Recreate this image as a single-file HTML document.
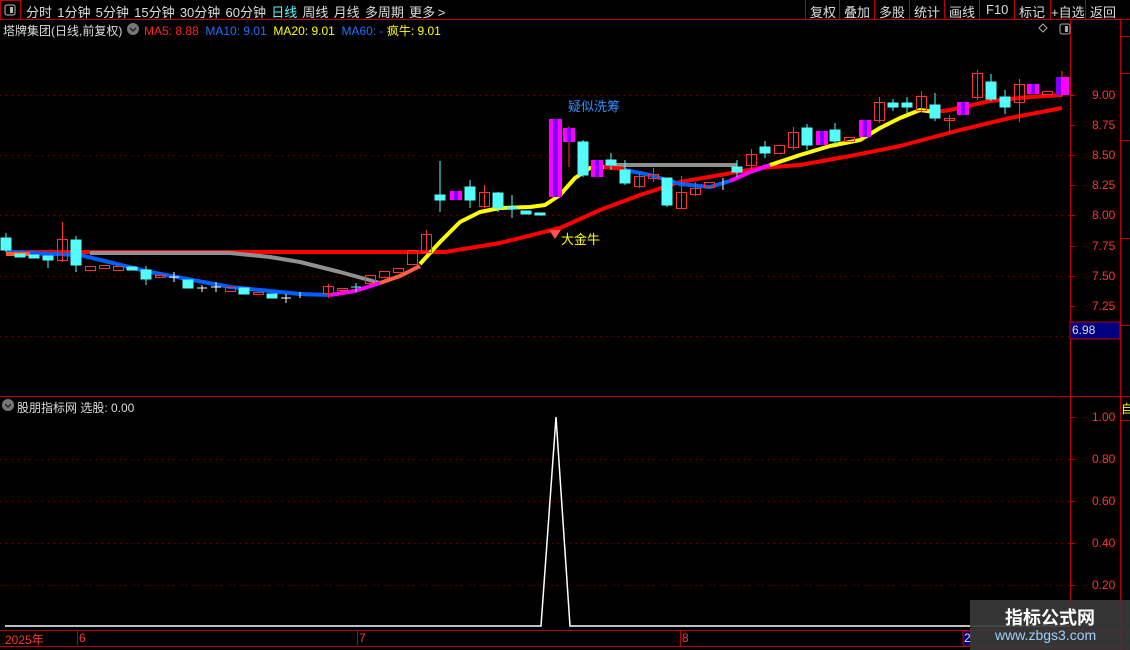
<!DOCTYPE html>
<html><head><meta charset="utf-8"><style>
body{margin:0;background:#000;width:1130px;height:650px;overflow:hidden;font-family:"Liberation Sans","Noto Sans CJK SC",sans-serif;position:relative}
.t{position:absolute;white-space:nowrap;font-size:12px}
</style></head><body>
<svg width="1130" height="650" style="position:absolute;left:0;top:0" xmlns="http://www.w3.org/2000/svg">
<g stroke="#c00000" stroke-width="1" fill="none">
<line x1="0" y1="19.5" x2="1130" y2="19.5"/>
<rect x="0.5" y="0.5" width="20" height="19"/>
<line x1="805.5" y1="0" x2="805.5" y2="19"/><line x1="839.5" y1="0" x2="839.5" y2="19"/><line x1="874.5" y1="0" x2="874.5" y2="19"/><line x1="909.5" y1="0" x2="909.5" y2="19"/><line x1="944.5" y1="0" x2="944.5" y2="19"/><line x1="979.5" y1="0" x2="979.5" y2="19"/><line x1="1014.5" y1="0" x2="1014.5" y2="19"/><line x1="1050.5" y1="0" x2="1050.5" y2="19"/><line x1="1085.5" y1="0" x2="1085.5" y2="19"/>
<line x1="1070.5" y1="20" x2="1070.5" y2="630"/>
<line x1="1120.5" y1="20" x2="1120.5" y2="650"/>
<line x1="0" y1="396.5" x2="1130" y2="396.5"/>
<line x1="0" y1="630.5" x2="1130" y2="630.5"/>
<line x1="0" y1="646.5" x2="1130" y2="646.5"/>
<line x1="1120" y1="36.5" x2="1130" y2="36.5"/><line x1="1120" y1="73.5" x2="1130" y2="73.5"/><line x1="1120" y1="140.5" x2="1130" y2="140.5"/><line x1="1120" y1="238.5" x2="1130" y2="238.5"/><line x1="1120" y1="325.5" x2="1130" y2="325.5"/>
<line x1="1120" y1="420.5" x2="1130" y2="420.5"/>
<line x1="77.5" y1="631" x2="77.5" y2="646"/><line x1="357.5" y1="631" x2="357.5" y2="646"/><line x1="680.5" y1="631" x2="680.5" y2="646"/>
</g>
<g stroke="#c00000" stroke-width="1">
<line x1="1070" y1="95.5" x2="1075" y2="95.5"/><line x1="1070" y1="125.5" x2="1075" y2="125.5"/><line x1="1070" y1="155.5" x2="1075" y2="155.5"/><line x1="1070" y1="185.5" x2="1075" y2="185.5"/><line x1="1070" y1="215.5" x2="1075" y2="215.5"/><line x1="1070" y1="246.5" x2="1075" y2="246.5"/><line x1="1070" y1="276.5" x2="1075" y2="276.5"/><line x1="1070" y1="306.5" x2="1075" y2="306.5"/>
<line x1="1070" y1="417.5" x2="1075" y2="417.5"/><line x1="1070" y1="459.5" x2="1075" y2="459.5"/><line x1="1070" y1="501.5" x2="1075" y2="501.5"/><line x1="1070" y1="543.5" x2="1075" y2="543.5"/><line x1="1070" y1="585.5" x2="1075" y2="585.5"/>
</g>
<g stroke="#8a0000" stroke-width="1" stroke-dasharray="1,5">
<line x1="0" y1="95.5" x2="1070" y2="95.5"/><line x1="0" y1="155.5" x2="1070" y2="155.5"/><line x1="0" y1="215.5" x2="1070" y2="215.5"/><line x1="0" y1="276.5" x2="1070" y2="276.5"/><line x1="0" y1="336.5" x2="1070" y2="336.5"/>
<line x1="0" y1="459.5" x2="1070" y2="459.5"/><line x1="0" y1="501.5" x2="1070" y2="501.5"/><line x1="0" y1="543.5" x2="1070" y2="543.5"/><line x1="0" y1="585.5" x2="1070" y2="585.5"/>
</g>
<rect x="1070" y="322" width="50" height="17" fill="#000080" stroke="#c00000"/>
<g fill="none" stroke-width="4" stroke-linejoin="round">
<polyline stroke="#ff0000" points="6,252 445,252 500,243 560,228 600,210 640,195 680,182 720,175 760,168 800,165 850,156 900,146 960,130 1010,118 1062,108"/>
<polyline stroke="#909090" points="90,253 230,253 270,257 300,262 340,272 380,283"/>
<polyline stroke="#909090" points="612,165 737,165"/>
<polyline stroke="#0060ff" points="6,252 80,255 150,272 230,287 300,294 330,295"/>
<polyline stroke="#ff00ff" points="330,295 355,291 380,283"/>
<polyline stroke="#ff6040" points="380,283 400,276 420,266"/>
<polyline stroke="#ffff00" points="420,264 440,242 460,222 480,212 500,208 530,207 545,205 560,195 575,178 590,168 604,167"/>
<polyline stroke="#ff0000" points="604,167 625,169"/>
<polyline stroke="#0060ff" points="625,170 650,175 680,184 710,187 730,181"/>
<polyline stroke="#ff00ff" points="730,181 750,172 770,165"/>
<polyline stroke="#ffff00" points="770,165 800,155 830,146 860,140 880,128 900,118 920,110 935,112"/>
<polyline stroke="#ff0000" points="935,112 950,110 990,101 1030,97 1062,95"/>
<polyline stroke="#ff6030" points="6,254 30,254"/>
</g>
<g stroke-width="1">
<g stroke="#54fcfc" fill="#54fcfc">
<line x1="6" y1="233" x2="6" y2="252"/><rect x="1" y="238" width="10" height="12"/>
<rect x="15" y="254" width="10" height="3"/><rect x="29" y="255" width="10" height="3"/>
<line x1="48" y1="256" x2="48" y2="268"/><rect x="43" y="256" width="10" height="4"/>
<line x1="76" y1="236" x2="76" y2="272"/><rect x="71" y="240" width="10" height="25"/>
<rect x="127" y="267" width="10" height="3"/><line x1="146" y1="266" x2="146" y2="285"/><rect x="141" y="270" width="10" height="9"/>
<rect x="183" y="280" width="10" height="8"/><rect x="239" y="288" width="10" height="6"/><rect x="267" y="294" width="10" height="4"/>
<line x1="356" y1="283" x2="356" y2="292"/><line x1="351" y1="287" x2="361" y2="287"/>
<line x1="440" y1="161" x2="440" y2="212"/><rect x="435" y="195" width="10" height="5"/>
<line x1="470" y1="180" x2="470" y2="208"/><rect x="465" y="187" width="10" height="13"/>
<line x1="498" y1="192" x2="498" y2="212"/><rect x="493" y="193" width="10" height="15"/>
<line x1="512" y1="195" x2="512" y2="218"/><rect x="507" y="207" width="10" height="2"/>
<rect x="521" y="211" width="10" height="3"/><rect x="535" y="213" width="10" height="2"/>
<line x1="583" y1="140" x2="583" y2="177"/><rect x="578" y="142" width="10" height="33"/>
<line x1="611" y1="153" x2="611" y2="170"/><rect x="606" y="160" width="10" height="5"/>
<line x1="625" y1="160" x2="625" y2="185"/><rect x="620" y="170" width="10" height="13"/>
<line x1="667" y1="178" x2="667" y2="207"/><rect x="662" y="178" width="10" height="27"/>
<line x1="737" y1="160" x2="737" y2="177"/><rect x="732" y="167" width="10" height="5"/>
<line x1="765" y1="141" x2="765" y2="158"/><rect x="760" y="147" width="10" height="6"/>
<line x1="807" y1="124" x2="807" y2="150"/><rect x="802" y="128" width="10" height="17"/>
<line x1="835" y1="123" x2="835" y2="145"/><rect x="830" y="130" width="10" height="11"/>
<line x1="893" y1="99" x2="893" y2="111"/><rect x="888" y="103" width="10" height="4"/>
<line x1="907" y1="97" x2="907" y2="113"/><rect x="902" y="103" width="10" height="4"/>
<line x1="935" y1="93" x2="935" y2="121"/><rect x="930" y="105" width="10" height="13"/>
<line x1="991" y1="74" x2="991" y2="101"/><rect x="986" y="82" width="10" height="17"/>
<line x1="1005" y1="90" x2="1005" y2="114"/><rect x="1000" y="97" width="10" height="10"/>
</g>
<g stroke="#ff3232" fill="none">
<line x1="62.5" y1="222" x2="62.5" y2="262"/><rect x="57.5" y="239.5" width="10" height="21"/>
<rect x="85.5" y="266.5" width="10" height="4"/><rect x="99.5" y="265.5" width="10" height="3"/><rect x="113.5" y="266.5" width="10" height="4"/>
<rect x="155.5" y="275.5" width="10" height="2"/><rect x="225.5" y="287.5" width="10" height="4"/><rect x="253.5" y="292.5" width="10" height="2"/>
<line x1="328.5" y1="284" x2="328.5" y2="298"/><rect x="323.5" y="286.5" width="10" height="7"/><rect x="337.5" y="288.5" width="10" height="2"/>
<rect x="365.5" y="275.5" width="10" height="8"/><rect x="379.5" y="271.5" width="10" height="6"/><rect x="393.5" y="268.5" width="10" height="4"/>
<rect x="407.5" y="250.5" width="10" height="14"/><line x1="426.5" y1="230" x2="426.5" y2="254"/><rect x="421.5" y="234.5" width="10" height="18"/>
<line x1="484.5" y1="185" x2="484.5" y2="208"/><rect x="479.5" y="192.5" width="10" height="14"/>
<line x1="639.5" y1="172" x2="639.5" y2="188"/><rect x="634.5" y="176.5" width="10" height="10"/>
<line x1="653.5" y1="168" x2="653.5" y2="182"/><rect x="648.5" y="174.5" width="10" height="4"/>
<line x1="681.5" y1="176" x2="681.5" y2="209"/><rect x="676.5" y="192.5" width="10" height="16"/>
<line x1="695.5" y1="182" x2="695.5" y2="196"/><rect x="690.5" y="188.5" width="10" height="6"/>
<rect x="704.5" y="182.5" width="10" height="5"/>
<line x1="751.5" y1="149" x2="751.5" y2="170"/><rect x="746.5" y="154.5" width="10" height="11"/>
<rect x="774.5" y="145.5" width="10" height="8"/><line x1="793.5" y1="127" x2="793.5" y2="150"/><rect x="788.5" y="132.5" width="10" height="15"/>
<rect x="844.5" y="137.5" width="10" height="4"/>
<line x1="879.5" y1="97" x2="879.5" y2="123"/><rect x="874.5" y="102.5" width="10" height="18"/>
<line x1="921.5" y1="91" x2="921.5" y2="112"/><rect x="916.5" y="96.5" width="10" height="14"/>
<line x1="949.5" y1="115" x2="949.5" y2="133"/><rect x="944.5" y="118.5" width="10" height="2"/>
<line x1="977.5" y1="70" x2="977.5" y2="100"/><rect x="972.5" y="73.5" width="10" height="24"/>
<line x1="1019.5" y1="79" x2="1019.5" y2="122"/><rect x="1014.5" y="84.5" width="10" height="18"/>
<rect x="1042.5" y="91.5" width="10" height="3"/>
</g>
<g stroke="#fff">
<line x1="174" y1="272" x2="174" y2="282"/><line x1="169" y1="277" x2="179" y2="277"/>
<line x1="202" y1="285" x2="202" y2="292"/><line x1="197" y1="288" x2="207" y2="288"/>
<line x1="216" y1="282" x2="216" y2="292"/><line x1="211" y1="287" x2="221" y2="287"/>
<line x1="286" y1="294" x2="286" y2="303"/><line x1="281" y1="298" x2="291" y2="298"/>
<line x1="300" y1="292" x2="300" y2="298"/><line x1="723" y1="178" x2="723" y2="190"/>
</g>
<g>
<rect x="450" y="191" width="12" height="9" fill="#ff00ff"/><rect x="454" y="191" width="4" height="9" fill="#8000ff"/>
<rect x="549" y="119" width="13" height="78" fill="#ff00ff"/><rect x="553" y="119" width="5" height="78" fill="#8000ff"/>
<line x1="569" y1="126" x2="569" y2="167" stroke="#ff3232"/><rect x="563" y="128" width="12" height="14" fill="#ff00ff"/><rect x="567" y="128" width="4" height="14" fill="#8000ff"/>
<rect x="591" y="160" width="12" height="17" fill="#ff00ff"/><rect x="595" y="160" width="4" height="17" fill="#8000ff"/>
<rect x="816" y="131" width="12" height="14" fill="#ff00ff"/><rect x="820" y="131" width="4" height="14" fill="#8000ff"/>
<rect x="859" y="120" width="12" height="17" fill="#ff00ff"/><rect x="863" y="120" width="4" height="17" fill="#8000ff"/>
<rect x="957" y="102" width="12" height="13" fill="#ff00ff"/><rect x="961" y="102" width="4" height="13" fill="#8000ff"/>
<rect x="1027" y="84" width="12" height="10" fill="#ff00ff"/><rect x="1031" y="84" width="4" height="10" fill="#8000ff"/>
<line x1="1062" y1="71" x2="1062" y2="97" stroke="#ff3232"/><rect x="1056" y="77" width="13" height="18" fill="#ff00ff"/><rect x="1056" y="77" width="5" height="18" fill="#8000ff"/>
</g>
</g>
<path d="M549,230 L561,230 L555,239 Z" fill="#ff5050"/>
<polyline fill="none" stroke="#fff" stroke-width="1.5" points="5,626 541,626 556,417 570,626 1070,626"/>
<rect x="963" y="631" width="8" height="15" fill="#000080" stroke="#c00000"/>
<rect x="970" y="600" width="160" height="50" fill="#3a3a3a" fill-opacity="0.92"/>
<rect x="1060" y="24" width="10" height="10" fill="none" stroke="#aaa" rx="2"/><rect x="1065" y="26" width="3" height="6" fill="#aaa"/>
<path d="M1043,24 L1047,28 L1043,32 L1039,28 Z" fill="none" stroke="#aaa"/>
<rect x="5" y="5" width="10" height="10" fill="none" stroke="#bbb" rx="2"/><rect x="10" y="7" width="3" height="6" fill="#bbb"/>
<circle cx="133" cy="29" r="6" fill="#777"/><path d="M130,28 L133,31 L136,28" fill="none" stroke="#222" stroke-width="1.5"/>
<circle cx="8" cy="405" r="6" fill="#777"/><path d="M5,404 L8,407 L11,404" fill="none" stroke="#222" stroke-width="1.5"/>
</svg>
<div class="t" style="left:26px;top:2px;color:#ddd;font-size:13px;word-spacing:-1px">分时&nbsp; 1分钟&nbsp; 5分钟&nbsp; 15分钟&nbsp; 30分钟&nbsp; 60分钟&nbsp; <span style="color:#54fcfc">日线</span>&nbsp; 周线&nbsp; 月线&nbsp; 多周期&nbsp; 更多 &gt;</div>
<div class="t" style="left:810px;top:2px;color:#ddd;font-size:13px">复权</div>
<div class="t" style="left:844px;top:2px;color:#ddd;font-size:13px">叠加</div>
<div class="t" style="left:879px;top:2px;color:#ddd;font-size:13px">多股</div>
<div class="t" style="left:914px;top:2px;color:#ddd;font-size:13px">统计</div>
<div class="t" style="left:949px;top:2px;color:#ddd;font-size:13px">画线</div>
<div class="t" style="left:986px;top:2px;color:#ddd;font-size:13px">F10</div>
<div class="t" style="left:1019px;top:2px;color:#ddd;font-size:13px">标记</div>
<div class="t" style="left:1051px;top:2px;color:#ddd;font-size:13px">+自选</div>
<div class="t" style="left:1090px;top:2px;color:#ddd;font-size:13px">返回</div>
<div class="t" style="left:3px;top:22px;color:#ddd;font-size:12px">塔牌集团(日线,前复权)</div>
<div class="t" style="left:144px;top:22px"><span style="color:#ff2020">MA5: 8.88</span>&nbsp; <span style="color:#2070ff">MA10: 9.01</span>&nbsp; <span style="color:#ffff00">MA20: 9.01</span>&nbsp; <span style="color:#2070ff">MA60: -</span> <span style="color:#ffff00">疯牛: 9.01</span></div>
<div class="t" style="left:568px;top:96px;color:#2f8fff;font-size:13px">疑似洗筹</div>
<div class="t" style="left:561px;top:229px;color:#ffff00;font-size:13px">大金牛</div>
<div class="t" style="left:17px;top:399px;color:#ddd;font-size:12px">股朋指标网 选股: 0.00</div>
<div class="t" style="left:1092px;top:88px;color:#ff3232">9.00</div>
<div class="t" style="left:1092px;top:118px;color:#ff3232">8.75</div>
<div class="t" style="left:1092px;top:148px;color:#ff3232">8.50</div>
<div class="t" style="left:1092px;top:178px;color:#ff3232">8.25</div>
<div class="t" style="left:1092px;top:208px;color:#ff3232">8.00</div>
<div class="t" style="left:1092px;top:239px;color:#ff3232">7.75</div>
<div class="t" style="left:1092px;top:269px;color:#ff3232">7.50</div>
<div class="t" style="left:1092px;top:299px;color:#ff3232">7.25</div>
<div class="t" style="left:1072px;top:323px;color:#ddd">6.98</div>
<div class="t" style="left:1092px;top:410px;color:#ff3232">1.00</div>
<div class="t" style="left:1092px;top:452px;color:#ff3232">0.80</div>
<div class="t" style="left:1092px;top:494px;color:#ff3232">0.60</div>
<div class="t" style="left:1092px;top:536px;color:#ff3232">0.40</div>
<div class="t" style="left:1092px;top:578px;color:#ff3232">0.20</div>
<div class="t" style="left:1121px;top:400px;color:#ffff00">自</div>
<div class="t" style="left:5px;top:631px;color:#ff3232">2025年</div>
<div class="t" style="left:79px;top:631px;color:#ff3232">6</div>
<div class="t" style="left:359px;top:631px;color:#ff3232">7</div>
<div class="t" style="left:682px;top:631px;color:#ff3232">8</div>
<div class="t" style="left:964px;top:631px;color:#ddd">2</div>
<div class="t" style="left:1005px;top:604px;color:#fff;font-size:18px;font-weight:bold">指标公式网</div>
<div class="t" style="left:995px;top:627px;color:#9cd0ff;font-size:14px">www.zbgs3.com</div>
</body></html>
